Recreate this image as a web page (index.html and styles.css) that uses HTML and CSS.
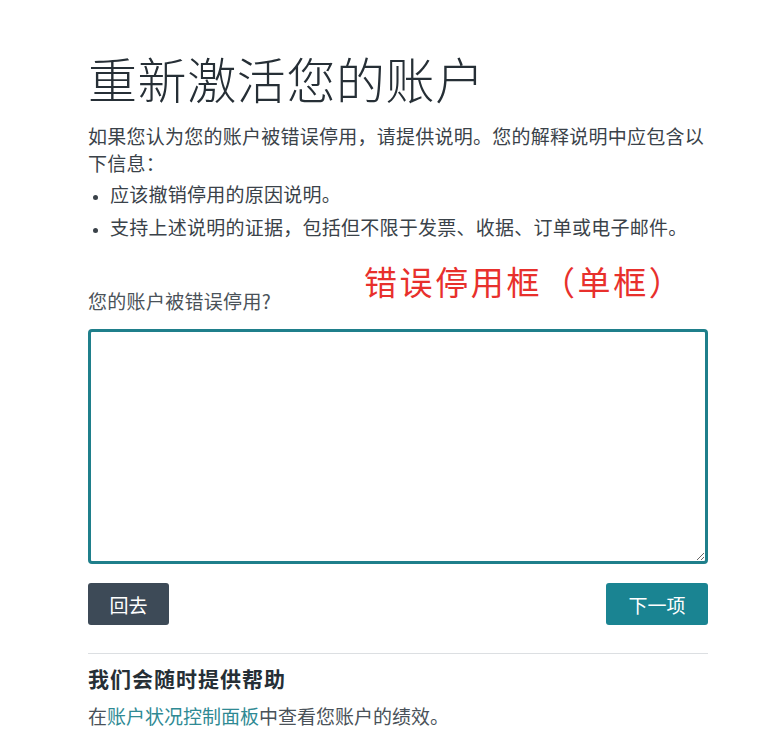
FILE: index.html
```html
<!DOCTYPE html>
<html lang="zh-CN">
<head>
<meta charset="utf-8">
<title>重新激活您的账户</title>
<link rel="stylesheet" href="styles.css">
</head>
<body>
<main class="page">
  <h1 class="title">重新激活您的账户</h1>
  <p class="intro">如果您认为您的账户被错误停用，请提供说明。您的解释说明中应包含以下信息：</p>
  <ul class="list">
    <li>应该撤销停用的原因说明。</li>
    <li>支持上述说明的证据，包括但不限于发票、收据、订单或电子邮件。</li>
  </ul>
  <div class="field">
    <label class="label" for="reason">您的账户被错误停用?</label>
    <span class="note">错误停用框（单框）</span>
    <textarea id="reason" class="box"></textarea>
  </div>
  <div class="actions">
    <button class="btn btn-back" type="button">回去</button>
    <button class="btn btn-next" type="button">下一项</button>
  </div>
  <section class="help">
    <h2 class="help-title">我们会随时提供帮助</h2>
    <p class="help-text">在<a href="#" class="link">账户状况控制面板</a>中查看您账户的绩效。</p>
  </section>
</main>
</body>
</html>
```

FILE: styles.css
```css
html, body {
  margin: 0;
  padding: 0;
  background: #ffffff;
}
body {
  font-family: "Noto Sans CJK SC", "Noto Sans", sans-serif;
  color: #333d45;
}
.page {
  width: 620px;
  padding: 49px 0 0 88px;
}
.title {
  margin: 0;
  font-size: 49px;
  line-height: 58px;
  font-weight: 300;
  color: #262f36;
  letter-spacing: 0.6px;
}
.intro {
  margin: 15px 0 0 0;
  font-size: 19px;
  line-height: 27px;
  color: #3a4249;
  letter-spacing: 0.25px;
}
.list {
  margin: 4px 0 0 0;
  padding: 0 0 0 22px;
  font-size: 19px;
  line-height: 27px;
  color: #3a4249;
  letter-spacing: 0.25px;
}
.list li {
  margin: 0 0 6px 0;
}
.list li::marker {
  font-size: 14px;
}
.field {
  position: relative;
  margin-top: 49px;
}
.label {
  display: block;
  font-size: 19px;
  line-height: 24px;
  color: #4a5259;
  letter-spacing: 0.3px;
}
.note {
  position: absolute;
  left: 276px;
  top: -28px;
  font-size: 33px;
  line-height: 40px;
  color: #e8302c;
  letter-spacing: 2.6px;
}
.box {
  display: block;
  box-sizing: border-box;
  width: 620px;
  height: 235px;
  margin-top: 16px;
  border: 3px solid #1f7f8b;
  border-radius: 4px;
  background: #fff;
  resize: vertical;
  font-family: inherit;
}
.actions {
  display: flex;
  justify-content: space-between;
  margin-top: 19px;
}
.btn {
  height: 42px;
  border: none;
  border-radius: 3px;
  color: #ffffff;
  font-family: "Noto Sans CJK SC", sans-serif;
  font-size: 19px;
  padding: 0;
}
.btn-back {
  width: 81px;
  background: #3d4a57;
}
.btn-next {
  width: 102px;
  background: #1a8492;
}
.help {
  margin-top: 28px;
  border-top: 1px solid #dcdfe2;
  padding-top: 10px;
}
.help-title {
  margin: 0;
  font-size: 21px;
  line-height: 28px;
  font-weight: 700;
  color: #262f36;
  letter-spacing: 1px;
}
.help-text {
  margin: 11px 0 0 0;
  font-size: 19px;
  line-height: 26px;
  color: #4a5259;
  letter-spacing: 0;
}
.link {
  color: #2f8a94;
  text-decoration: none;
}
```
